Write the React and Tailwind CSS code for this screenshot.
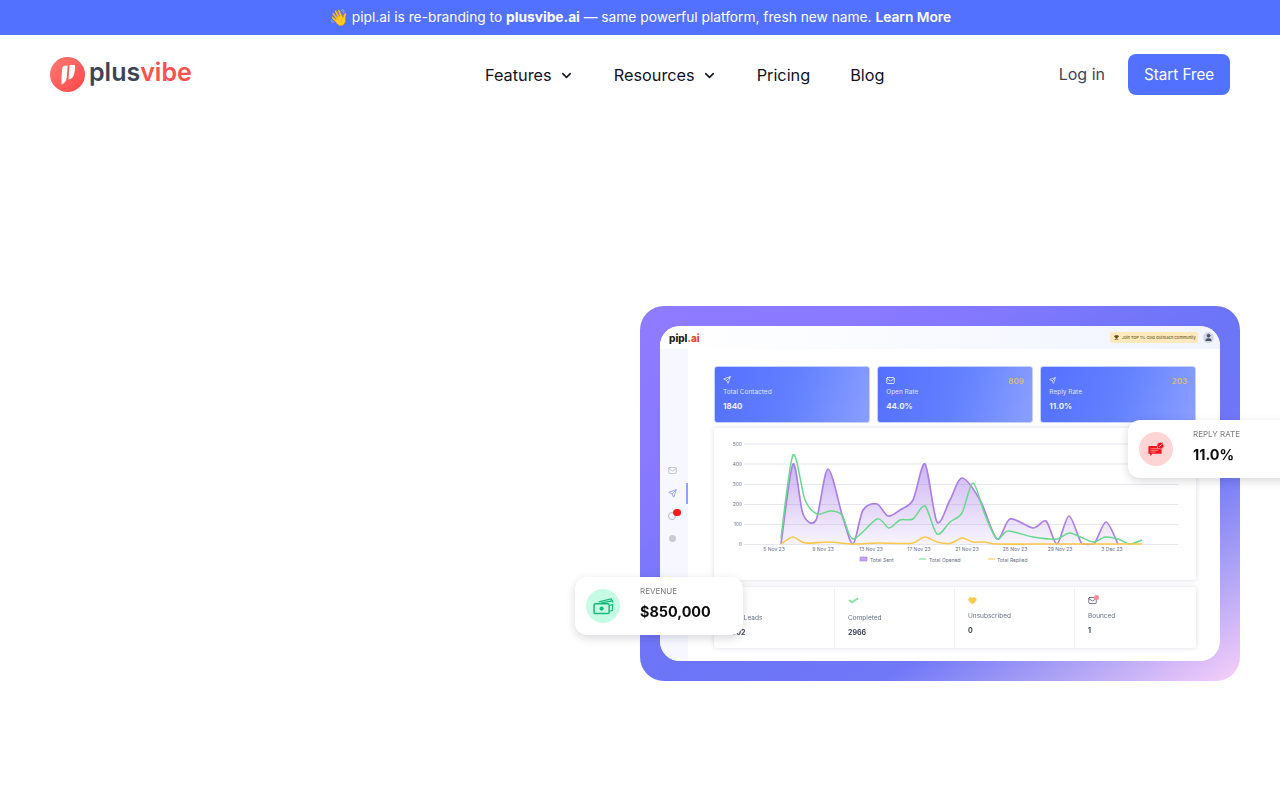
import React from "react";
import { ChevronDown, Send, Mail, Trophy, Heart, User } from "lucide-react";

const FONT = { fontFamily: "Inter, sans-serif" };

function smooth(pts) {
  let d = `M${pts[0][0]} ${pts[0][1]}`;
  for (let i = 0; i < pts.length - 1; i++) {
    const p0 = pts[i - 1] || pts[i];
    const p1 = pts[i];
    const p2 = pts[i + 1];
    const p3 = pts[i + 2] || p2;
    const c1x = p1[0] + (p2[0] - p0[0]) / 7;
    const c1y = Math.min(544.5, p1[1] + (p2[1] - p0[1]) / 7);
    const c2x = p2[0] - (p3[0] - p1[0]) / 7;
    const c2y = Math.min(544.5, p2[1] - (p3[1] - p1[1]) / 7);
    d += ` C${c1x.toFixed(1)} ${c1y.toFixed(1)} ${c2x.toFixed(1)} ${c2y.toFixed(1)} ${p2[0]} ${p2[1]}`;
  }
  return d;
}

const purple = [[781,544],[793,464],[803,514],[816,520],[828,469],[843,518],[853,544],[863,510],[877,504],[888,516],[900,510],[913,500],[925,464],[937,522],[950,500],[962,478],[980,500],[997,539],[1010,519],[1033,528],[1046,521],[1057,544],[1069,516],[1082,544],[1094,544],[1106,522],[1118,544]];
const green = [[781,538],[793,455],[805,500],[817,514],[830,511],[842,515],[853,539],[877,519],[889,528],[900,520],[913,519],[925,506],[937,534],[950,522],[962,513],[973,483],[985,515],[997,539],[1008,531],[1033,537],[1057,539],[1070,533],[1093,542],[1105,537],[1118,539],[1130,544],[1142,540]];
const yellow = [[781,544],[793,537],[805,543],[828,542],[853,544],[877,543],[900,543.5],[913,543],[925,537],[937,542],[950,543.5],[962,538],[973,542],[985,542],[997,544],[1040,544],[1142,544]];

function Chart() {
  const ticks = [[500,444],[400,464],[300,484.5],[200,504.5],[100,524.5],[0,544.5]];
  const xl = [["5 Nov 23",774],["9 Nov 23",823],["13 Nov 23",871],["17 Nov 23",919],["21 Nov 23",967],["25 Nov 23",1015],["29 Nov 23",1060],["3 Dec 23",1112]];
  return (
    <svg viewBox="714 428 482 152" className="block w-full h-full" style={FONT}>
      <defs>
        <linearGradient id="pf" x1="0" y1="0" x2="0" y2="1">
          <stop offset="0" stopColor="#a678e8" stopOpacity="0.55" />
          <stop offset="1" stopColor="#a678e8" stopOpacity="0.08" />
        </linearGradient>
      </defs>
      {ticks.map(([t, y]) => (
        <g key={t}>
          <line x1="744" x2="1178" y1={y} y2={y} stroke="#e6e8ee" strokeWidth="1.1" />
          <text x="742" y={y + 1.8} textAnchor="end" fontSize="5" fill="#667085">{t}</text>
        </g>
      ))}
      {xl.map(([t, x]) => (
        <text key={t} x={x} y="551" textAnchor="middle" fontSize="5" fill="#667085">{t}</text>
      ))}
      <path d={smooth(purple) + " L1118 544.5 L781 544.5 Z"} fill="url(#pf)" />
      <path d={smooth(purple)} fill="none" stroke="#ab7fe8" strokeWidth="1.7" />
      <path d={smooth(green)} fill="none" stroke="#66d98c" strokeWidth="1.5" />
      <path d={smooth(yellow)} fill="none" stroke="#fbc94a" strokeWidth="1.6" />
      <rect x="860" y="557" width="7" height="4" fill="#c4a3f0" stroke="#ab7fe8" strokeWidth="0.6" />
      <text x="870" y="561.5" fontSize="5" fill="#667085">Total Sent</text>
      <line x1="919" x2="926" y1="559" y2="559" stroke="#66d98c" strokeWidth="1" />
      <text x="929" y="561.5" fontSize="5" fill="#667085">Total Opened</text>
      <line x1="988" x2="995" y1="559" y2="559" stroke="#fbc94a" strokeWidth="1" />
      <text x="997" y="561.5" fontSize="5" fill="#667085">Total Replied</text>
    </svg>
  );
}

function Logo() {
  return (
    <div className="flex items-center gap-[4px]">
      <svg viewBox="0 0 35 35" className="w-[35px] h-[35px] shrink-0">
        <defs>
          <linearGradient id="lg" x1="0" y1="0" x2="1" y2="1">
            <stop offset="0" stopColor="#ff7a72" />
            <stop offset="1" stopColor="#ff4648" />
          </linearGradient>
        </defs>
        <circle cx="17.5" cy="17.5" r="17.5" fill="url(#lg)" />
        <path d="M12.6 10 C13.8 8.8 16 8.4 17.6 8.6 L16.8 20 C16.6 23.4 15 26 11.6 27.6 C11.2 22 11.6 15 12.6 10 Z" fill="#fff" />
        <path d="M19.6 8 L25 8 C25.2 12 24.8 17 22.8 20 C21.8 21.4 20.2 22.2 18.6 22.4 C18.8 18 19.2 13 19.6 8 Z" fill="#fff" />
      </svg>
      <span className="text-[25px] leading-none font-semibold -mt-[3px]" style={{ fontFamily: "Inter, sans-serif" }}>
        <span className="text-[#3d4456]">plus</span><span className="text-[#ff5050]">vibe</span>
      </span>
    </div>
  );
}

function MetricCard({ icon, label, value, extra }) {
  return (
    <div className="flex-1 h-[57px] rounded-[3px] bg-[linear-gradient(105deg,#5470ff_0%,#6280ff_50%,#8a9fff_100%)] border border-[#c5d0ff] px-[8px] pt-[8px] relative text-white">
      <div className="h-[10px] flex items-center">{icon}</div>
      <div className="text-[6.5px] leading-[8px] mt-[3px] text-[#dfe5ff]">{label}</div>
      <div className="text-[8px] leading-[10px] font-bold mt-[5px] text-[#eef1ff]">{value}</div>
      {extra && <div className="absolute right-[8px] top-[9px] text-[8px] leading-[10px] font-semibold text-[#d8bd74]">{extra}</div>}
    </div>
  );
}

function Stat({ icon, label, value, className, low }) {
  return (
    <div className={"h-full border-r border-[#f2f3f7] pl-[13px] pt-[8px] last:border-r-0 " + className}>
      <div className="h-[11px] flex items-center">{icon}</div>
      <div className={"text-[6.5px] leading-[8px] text-[#667085] " + (low ? "mt-[8px]" : "mt-[6px]")}>{label}</div>
      <div className="text-[7px] leading-[9px] font-bold mt-[6px] text-[#3d4456]">{value}</div>
    </div>
  );
}

function CheckMark() {
  return (
    <svg viewBox="0 0 12 7" className="w-[11px] h-[7px]">
      <path d="M1 3 L4.5 5.5 L11 1" fill="none" stroke="#86e0a5" strokeWidth="2" />
    </svg>
  );
}

function Dashboard() {
  return (
    <div className="w-full h-full rounded-[20px] overflow-hidden bg-white flex flex-col blur-[0.5px]">
      <div className="h-[23px] shrink-0 flex items-center justify-between pl-[9px] pr-[6px] bg-[linear-gradient(90deg,#ffffff,#f1f4ff)]">
        <div className="text-[10px] font-extrabold leading-none text-[#1c1c1c]">pipl<span className="text-[#f0441f]">.ai</span></div>
        <div className="flex items-center gap-[5px]">
          <div className="h-[11px] w-[88px] rounded-[2px] bg-[#fde9bd] flex items-center gap-[3px] pl-[4px] text-[3.9px] text-[#6b5a2a] font-medium whitespace-nowrap">
            <Trophy size={5} color="#5c4a16" fill="#5c4a16" />Join TOP 1% Cold Outreach Community
          </div>
          <div className="w-[11px] h-[11px] rounded-full bg-[#d5d8e6] flex items-center justify-center"><User size={9} color="#4b5268" fill="#4b5268" /></div>
        </div>
      </div>
      <div className="flex flex-1 min-h-0">
        <div className="w-[28px] shrink-0 bg-[#f6f7ff] flex flex-col items-center pt-[117px] pr-[4px] gap-[14px] relative">
          <Mail size={9} color="#b4b7c4" />
          <Send size={9} color="#7e93ff" />
          <div className="w-[8px] h-[8px] rounded-full border border-[#b4b7c4] relative">
            <span className="absolute -top-[4px] left-[4px] w-[8px] h-[7px] rounded-full bg-[#ff1a1a]" />
          </div>
          <div className="w-[7px] h-[7px] rounded-full bg-[#c9cbd4] mt-[1px]" />
          <span className="absolute right-0 top-[134px] w-[2px] h-[21px] bg-[#8fa2ff]" />
        </div>
        <div className="flex-1 min-w-0 pl-[26px] pr-[24px] pt-[17px] flex flex-col">
          <div className="flex gap-[7.5px]">
            <MetricCard icon={<Send size={8} color="#fff" />} label="Total Contacted" value="1840" />
            <MetricCard icon={<Mail size={9} color="#fff" />} label="Open Rate" value="44.0%" extra="809" />
            <MetricCard icon={<Send size={7} color="#fff" />} label="Reply Rate" value="11.0%" extra="203" />
          </div>
          <div className="h-[152px] mt-[5px] rounded-[3px] bg-white shadow-[0_0_5px_rgba(30,40,90,0.16)] shrink-0">
            <Chart />
          </div>
          <div className="h-[61px] mt-[7px] rounded-[3px] bg-white shadow-[0_0_5px_rgba(30,40,90,0.16)] flex shrink-0">
            <Stat low className="w-[121px]" icon={<span />} label="Total Leads" value="5002" />
            <Stat low className="w-[120px]" icon={<CheckMark />} label="Completed" value="2966" />
            <Stat className="w-[120px]" icon={<Heart size={9} color="#fbc94a" fill="#fbc94a" />} label="Unsubscribed" value="0" />
            <Stat className="flex-1" icon={<div className="relative"><Mail size={9} color="#4b5268" /><span className="absolute -top-[1px] -right-[2px] w-[5px] h-[5px] rounded-full bg-[#ff8a9a]" /></div>} label="Bounced" value="1" />
          </div>
        </div>
      </div>
    </div>
  );
}

function MoneyIcon() {
  return (
    <svg viewBox="0 0 22 18" className="w-[21px] h-[17px]">
      <path d="M6 4 L19 1 L20 2 M8 5.5 L20.5 3 L21 5" fill="none" stroke="#18b97a" strokeWidth="1.3" />
      <rect x="1" y="6" width="16" height="10.5" rx="1.5" fill="none" stroke="#18b97a" strokeWidth="1.6" />
      <circle cx="9" cy="11.2" r="2.2" fill="#18b97a" />
      <path d="M17.5 8 L20.5 7 L20.5 13 L17.5 14" fill="none" stroke="#18b97a" strokeWidth="1.2" />
    </svg>
  );
}

function ReplyIcon() {
  return (
    <svg viewBox="0 0 20 18" className="w-[17px] h-[17px]">
      <path d="M1.5 5 H15 A1 1 0 0 1 16 6 V13 A1 1 0 0 1 15 14 H5 L2.5 16.5 V14 H1.5 A1 1 0 0 1 .5 13 V6 A1 1 0 0 1 1.5 5 Z" fill="#f5141e" />
      <path d="M3 8 H12 M3 10 H12 M3 12 H9" stroke="#ffc2c2" strokeWidth="0.7" />
      <circle cx="14.5" cy="4.5" r="4" fill="#f5141e" stroke="#ffd6d6" strokeWidth="0.7" />
      <path d="M13 6 L16 3" stroke="#fff" strokeWidth="0.9" />
    </svg>
  );
}

function FloatCard({ circle, icon, label, value, className }) {
  return (
    <div className={"absolute h-[58px] rounded-[12px] bg-white shadow-[0_3px_10px_rgba(20,20,40,0.16)] flex items-center pl-[11px] " + className}>
      <div className={"w-[34px] h-[34px] rounded-full flex items-center justify-center shrink-0 " + circle}>{icon}</div>
      <div className="ml-[20px] -mt-[5px]">
        <div className="text-[8px] leading-[10px] text-[#7a7a7a] whitespace-nowrap">{label}</div>
        <div className="text-[14.4px] leading-[18px] font-bold text-[#0c0c0c] mt-[7px] whitespace-nowrap">{value}</div>
      </div>
    </div>
  );
}

function NavLink({ children, caret }) {
  return (
    <a className="flex items-center gap-[7px] text-[16.3px] leading-[24px] text-[#10121f]">
      {children}
      {caret && <ChevronDown size={15} strokeWidth={2.4} />}
    </a>
  );
}

export default function App() {
  return (
    <div className="w-[1280px] h-[800px] overflow-hidden bg-white" style={FONT}>
      <div className="h-[35px] bg-[#5271ff] flex items-center justify-center text-white text-[13.76px] leading-none whitespace-nowrap">
        <span className="text-[16px] mr-[3px] -mt-[2px]">👋</span>
        <span className="pt-[1px]">pipl.ai is re-branding to <b className="font-bold">plusvibe.ai</b> — same powerful platform, fresh new name. <b className="font-semibold">Learn More</b></span>
      </div>
      <header className="h-[80px] pl-[50px] pr-[50px] flex items-center relative">
        <div className="w-[435px] shrink-0 -mt-[2px]"><Logo /></div>
        <nav className="flex items-center gap-[40px]">
          <NavLink caret>Features</NavLink>
          <NavLink caret>Resources</NavLink>
          <NavLink>Pricing</NavLink>
          <NavLink>Blog</NavLink>
        </nav>
        <div className="ml-auto flex items-center gap-[23px] -mt-[1px]">
          <a className="text-[16px] text-[#3d4456] -mt-[2px]">Log in</a>
          <a className="w-[102px] h-[41px] rounded-[8px] bg-[#5271ff] text-white text-[15.2px] flex items-center justify-center pt-[1px]">Start Free</a>
        </div>
      </header>
      <main className="flex justify-end pr-[40px] pt-[191px]">
        <div className="relative w-[600px] h-[375px] p-[20px] rounded-[24px] bg-[linear-gradient(to_bottom_right,#8f7bff_0%,#8779ff_25%,#6c74f7_50%,#7078f8_70%,#b0a5f5_85%,#f8cffa_100%)]">
          <Dashboard />
          <FloatCard className="-left-[65px] top-[271px] w-[168px]" circle="bg-[#c6fce6]" icon={<MoneyIcon />} label="REVENUE" value="$850,000" />
          <FloatCard className="left-[488px] top-[114px] w-[170px]" circle="bg-[#ffd4d4]" icon={<ReplyIcon />} label="REPLY RATE" value="11.0%" />
        </div>
      </main>
    </div>
  );
}
